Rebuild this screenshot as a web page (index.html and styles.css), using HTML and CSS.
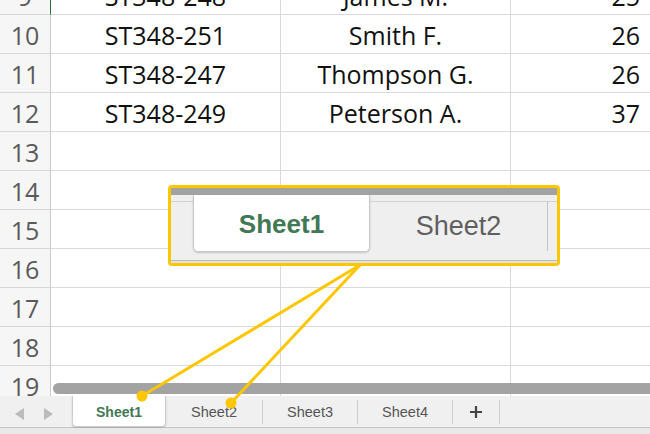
FILE: index.html
```html
<!DOCTYPE html>
<html>
<head>
<meta charset="utf-8">
<link rel="stylesheet" href="styles.css">
</head>
<body>
<div class="app">
  <div class="sheet">
    <div class="grid">
      <div class="cell rh sel">9</div><div class="cell c">ST348-248</div><div class="cell c">James M.</div><div class="cell r">25</div>
      <div class="cell rh">10</div><div class="cell c">ST348-251</div><div class="cell c">Smith F.</div><div class="cell r">26</div>
      <div class="cell rh">11</div><div class="cell c">ST348-247</div><div class="cell c">Thompson G.</div><div class="cell r">26</div>
      <div class="cell rh">12</div><div class="cell c">ST348-249</div><div class="cell c">Peterson A.</div><div class="cell r">37</div>
      <div class="cell rh">13</div><div class="cell c"></div><div class="cell c"></div><div class="cell r"></div>
      <div class="cell rh">14</div><div class="cell c"></div><div class="cell c"></div><div class="cell r"></div>
      <div class="cell rh">15</div><div class="cell c"></div><div class="cell c"></div><div class="cell r"></div>
      <div class="cell rh">16</div><div class="cell c"></div><div class="cell c"></div><div class="cell r"></div>
      <div class="cell rh">17</div><div class="cell c"></div><div class="cell c"></div><div class="cell r"></div>
      <div class="cell rh">18</div><div class="cell c"></div><div class="cell c"></div><div class="cell r"></div>
      <div class="cell rh">19</div><div class="cell c"></div><div class="cell c"></div><div class="cell r"></div>
    </div>
    <div class="hscroll"></div>
    <div class="callout">
      <div class="co-bar"></div>
      <div class="co-strip">
        <div class="co-spacer"></div>
        <div class="co-tab active">Sheet1</div>
        <div class="co-tab">Sheet2</div>
        <div class="co-rest"></div>
      </div>
      <div class="co-bottom"></div>
    </div>
  </div>
  <div class="tabbar">
    <div class="nav">
      <svg width="12" height="14" viewBox="0 0 12 14"><polygon points="10,1 10,13 1,7" fill="#bcbcbc"/></svg>
      <svg width="12" height="14" viewBox="0 0 12 14"><polygon points="2,1 2,13 11,7" fill="#bcbcbc"/></svg>
    </div>
    <div class="tab active">Sheet1</div>
    <div class="tab w97">Sheet2</div>
    <div class="tab">Sheet3</div>
    <div class="tab">Sheet4</div>
    <div class="tab plus">
      <svg width="14" height="14" viewBox="0 0 14 14"><path d="M7 1v12M1 7h12" stroke="#444" stroke-width="2.2"/></svg>
    </div>
  </div>
  <div class="footer"></div>
  <svg class="pointers" width="650" height="434" viewBox="0 0 650 434">
    <line x1="360" y1="265" x2="142" y2="396" stroke="#fcc600" stroke-width="3" stroke-linecap="round"/>
    <line x1="360" y1="265" x2="231" y2="403" stroke="#fcc600" stroke-width="3" stroke-linecap="round"/>
    <circle cx="142" cy="396" r="5.5" fill="#fcc600"/>
    <circle cx="231" cy="403" r="5.5" fill="#fcc600"/>
  </svg>
</div>
</body>
</html>
```

FILE: styles.css
```css
html, body {
  margin: 0;
  padding: 0;
  background: #ffffff;
}
.app {
  position: relative;
  width: 650px;
  height: 434px;
  overflow: hidden;
  display: flex;
  flex-direction: column;
  font-family: "Open Sans", "Liberation Sans", sans-serif;
}
.sheet {
  position: relative;
  height: 396px;
  overflow: hidden;
  flex: none;
}
.grid {
  display: grid;
  grid-template-columns: 51px 230px 230px 139px;
  grid-auto-rows: 39px;
  margin-top: -24px;
}
.cell {
  box-sizing: border-box;
  height: 39px;
  border-bottom: 1px solid #dadada;
  border-right: 1px solid #dadada;
  padding-top: 2px;
  line-height: 36px;
  font-size: 25px;
  color: #111;
  white-space: nowrap;
}
.rh {
  background: #f6f6f6;
  color: #5a5a5a;
  text-align: center;
  border-right-color: #cacaca;
  border-bottom-color: #d6d6d6;
}
.rh.sel {
  border-right: 1px solid #2f6e47;
}
.c {
  text-align: center;
}
.r {
  text-align: right;
  padding-right: 10px;
  border-right: none;
}
.hscroll {
  position: absolute;
  left: 53px;
  top: 383px;
  width: 610px;
  height: 11px;
  border-radius: 6px;
  background: #a3a3a3;
}
.callout {
  position: absolute;
  left: 168px;
  top: 185px;
  width: 392px;
  height: 81px;
  box-sizing: border-box;
  border: 3px solid #fcc600;
  border-radius: 4px;
  background: #efefef;
  display: flex;
  flex-direction: column;
  overflow: hidden;
}
.co-bar {
  height: 7px;
  background: #a2a2a2;
  flex: none;
}
.co-strip {
  display: flex;
  height: 65px;
  flex: none;
}
.co-spacer {
  width: 22px;
  margin-top: 6px;
  border-top: 1px solid #d2d2d2;
}
.co-tab {
  width: 178px;
  margin-top: 6px;
  border-top: 1px solid #d2d2d2;
  height: 50px;
  display: flex;
  align-items: center;
  justify-content: center;
  font-family: "Liberation Sans", Arial, sans-serif;
  font-size: 27px;
  color: #5f5f5f;
  border-right: 1px solid #c4c4c4;
  box-sizing: border-box;
}
.co-tab.active {
  width: 177px;
  margin-top: 0;
  height: 57px;
  border-top: none;
  background: #ffffff;
  border: 1px solid #c8c8c8;
  border-top: none;
  border-radius: 0 0 5px 5px;
  box-shadow: 0 1px 2px rgba(0, 0, 0, 0.18);
  font-weight: bold;
  font-size: 26px;
  color: #427855;
  padding-top: 2px;
}
.co-rest {
  flex: 1;
  margin-top: 6px;
  border-top: 1px solid #d2d2d2;
}
.co-bottom {
  flex: 1;
  border-top: 1px solid #b9b9b9;
  background: #e2e2e2;
}
.tabbar {
  height: 32px;
  box-sizing: border-box;
  background: #f0f0f0;
  border-bottom: 1px solid #c6c6c6;
  display: flex;
  flex: none;
  font-family: "Liberation Sans", Arial, sans-serif;
}
.nav {
  width: 72px;
  display: flex;
  align-items: center;
  gap: 16px;
  padding-left: 14px;
  box-sizing: border-box;
  padding-top: 4px;
}
.tab {
  width: 95px;
  height: 24px;
  margin-top: 4px;
  box-sizing: border-box;
  border-right: 1px solid #cdcdcd;
  display: flex;
  align-items: center;
  justify-content: center;
  font-size: 14.5px;
  color: #555555;
}
.tab.w97 {
  width: 97px;
}
.tab.active {
  width: 94px;
  height: 31px;
  margin-top: 0;
  background: #ffffff;
  border: 1px solid #cccccc;
  border-top: none;
  border-radius: 0 0 4px 4px;
  box-shadow: 0 1px 2px rgba(0, 0, 0, 0.15);
  font-weight: bold;
  font-size: 14px;
  color: #427855;
  padding-top: 1px;
}
.tab.plus {
  width: 47px;
}
.footer {
  flex: 1;
  background: #e9e9e9;
}
.pointers {
  position: absolute;
  left: 0;
  top: 0;
  pointer-events: none;
}
```
